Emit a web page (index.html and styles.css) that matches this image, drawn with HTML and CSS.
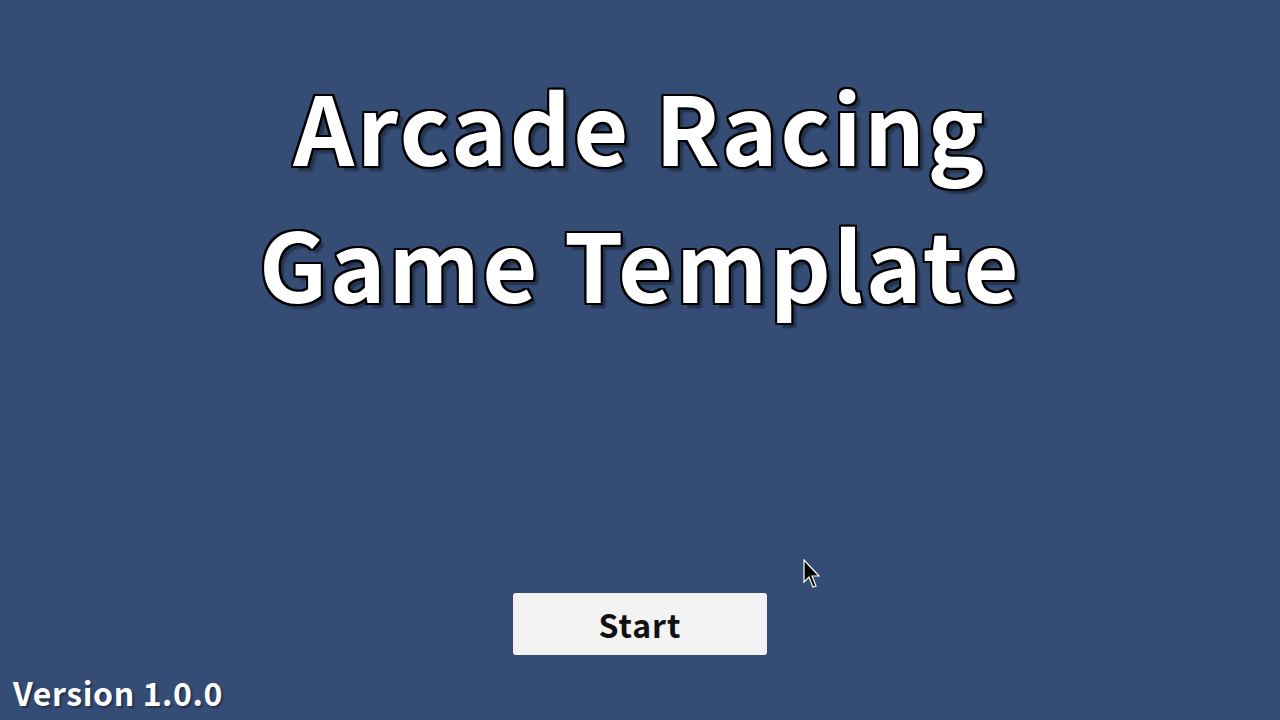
FILE: index.html
```html
<!DOCTYPE html>
<html lang="en">
<head>
    <meta charset="UTF-8">
    <meta name="viewport" content="width=device-width, initial-scale=1.0">
    <title>Arcade Racing Game Template</title>
    <link rel="stylesheet" href="styles.css">
</head>
<body>
    <div class="menu-screen">
        <header class="title-block">
            <h1 class="game-title">Arcade Racing<br>Game Template</h1>
        </header>

        <div class="menu-actions">
            <button class="start-btn">Start</button>
        </div>

        <footer class="version-bar">
            <p class="version-text">Version 1.0.0</p>
        </footer>

        <!-- pointer sitting over the canvas -->
        <svg class="pointer" width="20" height="32" viewBox="0 0 20 32">
            <path d="M1 1 L1 23 L6 18 L10 28 L13 27 L9 17 L16 17 Z" fill="#000" stroke="#fff" stroke-width="1.2" stroke-linejoin="miter"/>
        </svg>
    </div>
</body>
</html>
```

FILE: styles.css
```css
/* global styles */
* {
    margin: 0;
    padding: 0;
    box-sizing: border-box;
}

body {
    background: #354c75;
    font-family: 'Noto Sans CJK JP', 'Source Sans Pro', sans-serif;
    width: 1280px;
    height: 720px;
    overflow: hidden;
}

/* main menu layout */
.menu-screen {
    position: relative;
    height: 100%;
    display: flex;
    flex-direction: column;
    align-items: center;
}

.title-block {
    padding-top: 56px;
}

.game-title {
    color: #fff;
    font-size: 95px;
    font-weight: 700;
    line-height: 137px;
    letter-spacing: 2.5px;
    text-align: center;
    text-shadow:
        -2px 0 0 #000, 2px 0 0 #000, 0 -2px 0 #000, 0 2px 0 #000,
        -2px -2px 0 #000, 2px -2px 0 #000, -2px 2px 0 #000, 2px 2px 0 #000,
        5px 5px 2px rgba(0, 0, 0, 0.35);
}

/* start button */
.menu-actions {
    margin-top: auto;
    margin-bottom: 20px;
}

.start-btn {
    width: 254px;
    height: 62px;
    background-color: #f3f3f3;
    border: none;
    border-radius: 3px;
    color: #111;
    font-family: inherit;
    font-size: 32px;
    font-weight: 700;
    letter-spacing: 1px;
    cursor: pointer;
}

/* version label */
.version-bar {
    align-self: flex-start;
    padding: 0 0 11px 13px;
}

.version-text {
    color: #fff;
    font-size: 32px;
    font-weight: 700;
    line-height: 34px;
    letter-spacing: 0.6px;
    text-shadow: 2px 2px 2px rgba(0, 0, 0, 0.35);
}

.pointer {
    position: absolute;
    left: 803px;
    top: 559px;
}
```
